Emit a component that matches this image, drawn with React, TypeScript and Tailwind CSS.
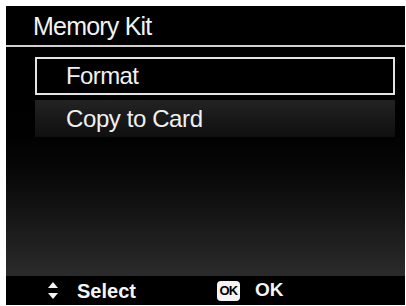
export default function App() {
  return (
    <div className="h-[306px] w-[406px] bg-white pl-[6px] pt-[6px] font-['Liberation_Sans',Arial,sans-serif]">
      <div className="flex h-[299px] w-[399px] flex-col bg-black">
        {/* header */}
        <div className="flex h-[39px] items-center pl-[27px] pt-[2px] text-[25px] tracking-[-0.8px] text-[#f2f2f2]">
          Memory Kit
        </div>
        <div className="h-[2px] bg-[#cfcfcf]" />

        {/* menu */}
        <div className="flex flex-1 flex-col gap-[5px] bg-gradient-to-b from-black from-15% to-[#2b2b2b] pl-[29px] pr-[10px] pt-[10px]">
          <div className="flex h-[38px] items-center border-2 border-[#e4e4e4] bg-black pl-[29px] text-[24px] tracking-[-0.6px] text-[#f0f0f0]">
            Format
          </div>
          <div className="flex h-[37px] items-center bg-gradient-to-b from-[#232323] to-[#0f0f0f] pl-[31px] text-[24px] tracking-[-0.4px] text-[#f0f0f0]">
            Copy to Card
          </div>
        </div>

        {/* footer */}
        <div className="flex h-[29px] items-center bg-black text-[#f4f4f4]">
          <svg className="ml-[42px]" width="10" height="17" viewBox="0 0 10 17">
            <polygon points="5,0 10,6 0,6" fill="#f4f4f4" />
            <polygon points="0,11 10,11 5,17" fill="#f4f4f4" />
          </svg>
          <span className="ml-[19px] text-[20px] font-bold">Select</span>
          <span className="ml-[81px] flex h-[20px] w-[23px] items-center justify-center rounded-[4px] bg-[#f4f4f4] text-[13px] font-bold tracking-[-0.8px] text-black">
            OK
          </span>
          <span className="ml-[15px] text-[19px] font-semibold">OK</span>
        </div>
      </div>
    </div>
  );
}
